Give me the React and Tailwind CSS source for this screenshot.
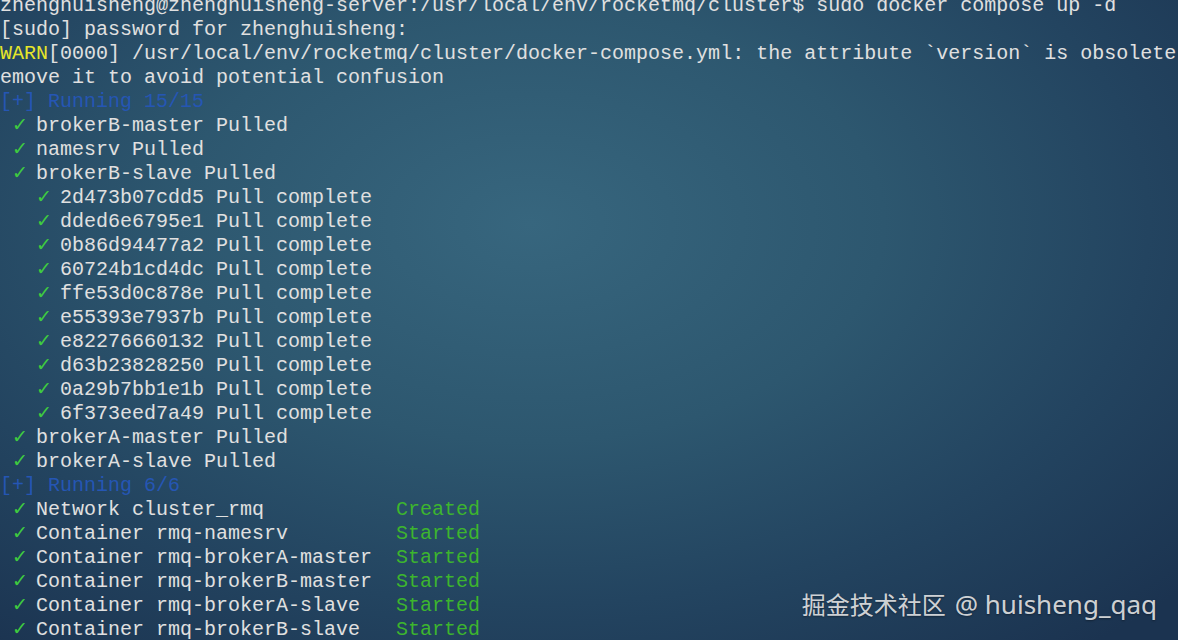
import React from 'react';

const pulls = [
    '2d473b07cdd5',
    'dded6e6795e1',
    '0b86d94477a2',
    '60724b1cd4dc',
    'ffe53d0c878e',
    'e55393e7937b',
    'e82276660132',
    'd63b23828250',
    '0a29b7bb1e1b',
    '6f373eed7a49'
];

const started = [
    { name: 'Network cluster_rmq      ', status: 'Created' },
    { name: 'Container rmq-namesrv    ', status: 'Started' },
    { name: 'Container rmq-brokerA-master', status: 'Started', pad: '  ' },
    { name: 'Container rmq-brokerB-master', status: 'Started', pad: '  ' },
    { name: 'Container rmq-brokerA-slave ', status: 'Started', pad: '  ' },
    { name: 'Container rmq-brokerB-slave ', status: 'Started', pad: '  ' }
];

// check mark + the space after it: two terminal cells, drawn heavier than the text
const Check = () => (
    <span className="inline-block w-6 text-[19px] leading-none font-bold text-[#3fcb3f]" style={{ fontFamily: '"DejaVu Sans", monospace' }}>
        ✓
    </span>
);

const Line = ({ children }) => <div className="h-6 leading-6 whitespace-pre">{children}</div>;

const Running = ({ text }) => (
    <Line>
        <span className="text-[#2556b4]">{text}</span>
    </Line>
);

export default function App() {
    return (
        <div className="relative h-[640px] w-full overflow-hidden bg-[radial-gradient(ellipse_75%_85%_at_45%_35%,#37667e_0%,#2d576f_40%,#234460_70%,#1b3350_100%)]">
            {/* terminal output */}
            <div
                className="mt-[-6px] text-[20px] text-[#e0e0e0]"
                style={{ fontFamily: '"Liberation Mono", "DejaVu Sans Mono", monospace' }}
            >
                <Line>zhenghuisheng@zhenghuisheng-server:/usr/local/env/rocketmq/cluster$ sudo docker compose up -d</Line>
                <Line>[sudo] password for zhenghuisheng:</Line>
                <Line>
                    <span className="text-[#e5e52a]">WARN</span>
                    [0000] /usr/local/env/rocketmq/cluster/docker-compose.yml: the attribute `version` is obsolete, it will be ignored, please r
                </Line>
                <Line>emove it to avoid potential confusion</Line>
                <Running text="[+] Running 15/15" />
                <Line> <Check />brokerB-master Pulled</Line>
                <Line> <Check />namesrv Pulled</Line>
                <Line> <Check />brokerB-slave Pulled</Line>
                {pulls.map((id) => (
                    <Line key={id}>
                        {'   '}
                        <Check />
                        {id} Pull complete
                    </Line>
                ))}
                <Line> <Check />brokerA-master Pulled</Line>
                <Line> <Check />brokerA-slave Pulled</Line>
                <Running text="[+] Running 6/6" />
                {started.map((row) => (
                    <Line key={row.name}>
                        {' '}
                        <Check />
                        {row.name}
                        {row.pad || '     '}
                        <span className="text-[#3db52e]">{row.status}</span>
                    </Line>
                ))}
            </div>

            {/* watermark */}
            <div
                className="absolute right-[21px] bottom-[19px] flex items-baseline gap-[9px] leading-[32px] text-[#e8e8e8]/90 [text-shadow:0_1px_2px_rgba(0,0,0,0.35)]"
                style={{ fontFamily: '"Noto Sans", "Noto Sans CJK SC", sans-serif' }}
            >
                <span className="text-[24px]">掘金技术社区</span>
                <span className="text-[26px]">@ huisheng_qaq</span>
            </div>
        </div>
    );
}
